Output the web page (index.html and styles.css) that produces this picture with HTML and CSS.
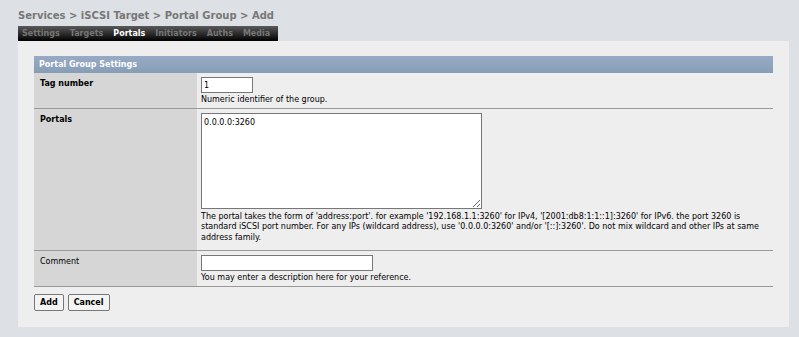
FILE: index.html
```html
<!DOCTYPE html>
<html lang="en">
<head>
  <meta charset="UTF-8" />
  <title>Services > iSCSI Target > Portal Group > Add</title>
  <link rel="stylesheet" href="styles.css">
</head>
<body>

  <div class="page">
    <div class="title">Services &gt; iSCSI Target &gt; Portal Group &gt; Add</div>

    <!-- Tab bar -->
    <div class="tabs">
      <span class="tab">Settings</span>
      <span class="tab">Targets</span>
      <span class="tab active">Portals</span>
      <span class="tab">Initiators</span>
      <span class="tab">Auths</span>
      <span class="tab">Media</span>
    </div>

    <div class="panel">
      <table class="settings">
        <tr>
          <td class="list-header" colspan="2">Portal Group Settings</td>
        </tr>
        <tr>
          <td class="label req">Tag number</td>
          <td class="field">
            <input type="text" class="tag-input" value="1">
            <div class="hint">Numeric identifier of the group.</div>
          </td>
        </tr>
        <tr>
          <td class="label req">Portals</td>
          <td class="field tall">
            <textarea class="portals-input">0.0.0.0:3260</textarea>
            <div class="hint">The portal takes the form of 'address:port'. for example '192.168.1.1:3260' for IPv4, '[2001:db8:1:1::1]:3260' for IPv6. the port 3260 is standard iSCSI port number. For any IPs (wildcard address), use '0.0.0.0:3260' and/or '[::]:3260'. Do not mix wildcard and other IPs at same address family.</div>
          </td>
        </tr>
        <tr>
          <td class="label">Comment</td>
          <td class="field">
            <input type="text" class="comment-input" value="">
            <div class="hint">You may enter a description here for your reference.</div>
          </td>
        </tr>
      </table>

      <div class="buttons">
        <button class="btn">Add</button>
        <button class="btn">Cancel</button>
      </div>
    </div>
  </div>

</body>
</html>
```

FILE: styles.css
```css
body {
  margin: 0;
  background-color: #dde0e4;
  font-family: "DejaVu Sans", Verdana, sans-serif;
  font-size: 8px;
  color: #000;
}

.page {
  padding: 6px 10px 10px 18px;
}

.title {
  font-size: 10px;
  font-weight: bold;
  color: #777;
  height: 20px;
  line-height: 20px;
}

.tabs {
  display: inline-flex;
  gap: 10px;
  height: 15px;
  padding: 0 8px 0 4px;
  align-items: center;
  background: linear-gradient(#5a5a5a, #000);
}

.tab {
  font-size: 8px;
  font-weight: bold;
  color: #777;
}

.tab.active {
  color: #fff;
}

.panel {
  background-color: #eee;
  padding: 15px 16px 16px 16px;
}

.settings {
  width: 100%;
  border-collapse: collapse;
}

.settings td {
  padding: 0;
  vertical-align: top;
}

.list-header {
  height: 17px;
  padding-left: 5px !important;
  font-weight: bold;
  color: #fff;
  background: linear-gradient(#98abc4, #879db6);
  vertical-align: middle !important;
}

.label {
  width: 163px;
  background-color: #d6d6d6;
  padding: 6px 6px !important;
  border-bottom: 1px solid #999;
  box-sizing: border-box;
}

.label.req {
  font-weight: bold;
}

.field {
  padding: 4px 4px 2px 4px !important;
  border-bottom: 1px solid #999;
  line-height: 11px;
}

.field.tall {
  padding-bottom: 7px !important;
}

input, textarea {
  font-family: "DejaVu Sans", Verdana, sans-serif;
  font-size: 8px;
  border: 1px solid #777;
  background: #fff;
  padding: 1px 2px;
  margin: 0;
  box-sizing: border-box;
  display: block;
}

.tag-input {
  width: 52px;
  height: 16px;
}

.portals-input {
  width: 281px;
  height: 96px;
  padding: 3px 2px;
  line-height: 11px;
  resize: both;
}

.comment-input {
  width: 172px;
  height: 16px;
}

.hint {
  margin-top: 2px;
  line-height: 10.6px;
}

.tall .hint {
  margin-top: 3px;
}

.buttons {
  display: flex;
  gap: 4px;
  margin-top: 7px;
}

.btn {
  font-family: "DejaVu Sans", Verdana, sans-serif;
  font-size: 8px;
  font-weight: bold;
  height: 17px;
  padding: 0 5px;
  background-color: #f4f4f4;
  border: 1px solid #777;
  border-radius: 2px;
}
```
